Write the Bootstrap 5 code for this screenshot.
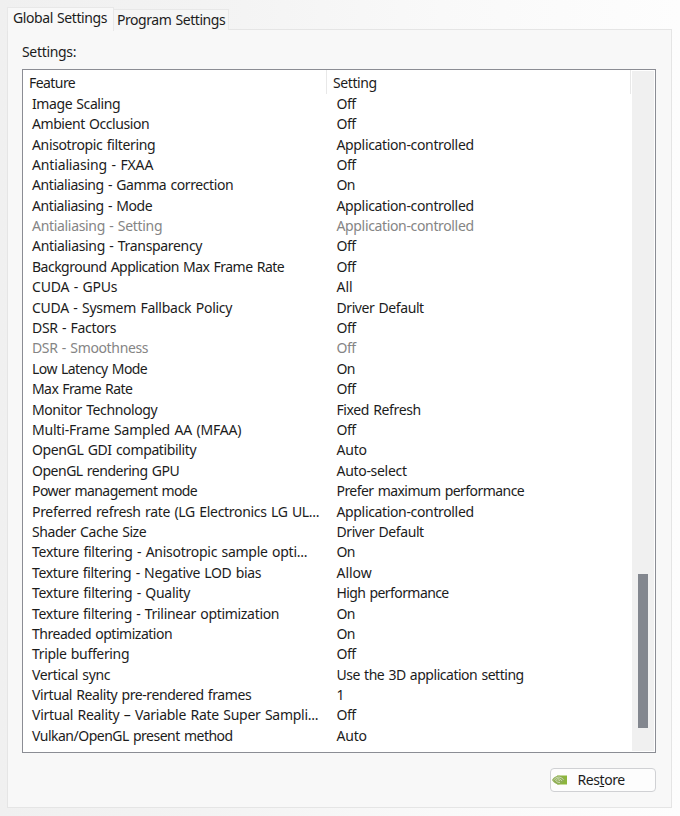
<!DOCTYPE html>
<html lang="en">
<head>
<meta charset="utf-8">
<meta name="viewport" content="width=device-width, initial-scale=1">
<title>Global Settings</title>
<link rel="stylesheet" href="https://cdn.jsdelivr.net/npm/bootstrap@5.3.0/dist/css/bootstrap.min.css">
<style>
body{width:680px;height:816px;font-family:"Noto Sans",sans-serif;font-size:14px;line-height:20px;color:#1c1c1c;background:linear-gradient(90deg,#f0f0f0 0,#f3f3f3 30%,#f9f9f9 65%,#fdfdfd 100%);white-space:nowrap}
.tabs{height:30px;padding:7px 0 0 7px}
.tab-on{width:107px;height:24px;background:#f8f8f8;border:1px solid #e8e8e8;border-bottom:0;padding:0 0 0 5px;z-index:1;margin-bottom:-1px}
.tab-off{width:115px;height:21px;background:#f5f5f5;border:1px solid #e8e8e8;border-left:0;border-bottom:0;padding:0 0 0 3px}
.panel{margin:-1px 8px 0 7px;height:779px;background:#f8f8f8;border:1px solid #e5e5e5;padding:0 15px 0 14px}
.caption{height:39px;padding-top:12px}
.listbox{height:684px;background:#fff;border:1px solid #8b8d94}
.head{height:23.75px}
.head>div{padding:2.5px 0 0 6px}
.c1{width:304px;border-right:1px solid #e8e8e8}
.c2{width:304px;border-right:1px solid #e8e8e8}
.item{height:20.4px;line-height:20.4px}
.item>div:first-child{width:304.5px;padding-left:9px}
.item>div:last-child{padding-left:9px}
.off{color:#858585}
.track{width:22px;background:#f0f0f0;margin:1px 1px 1px 0;padding:503px 0 0 6px}
.thumb{width:10px;height:154px;background:#83878f}
.restore{width:106px;height:24px;margin-top:15px;background:#fdfdfd;border:1px solid #d0d1d4;border-radius:4px;padding:0 0 0 1px;color:#1c1c1c;font-size:14px;line-height:20px}
.restore .fit{margin-left:10.5px}
.fit{display:inline-block;word-spacing:1px}
</style>
</head>
<body class="overflow-hidden">
<div class="tabs d-flex align-items-end">
 <div class="tab-on position-relative"><span class="fit" data-w="94.8">Global Settings</span></div>
 <div class="tab-off"><span class="fit" data-w="109">Program Settings</span></div>
</div>
<main class="panel">
 <div class="caption"><span class="fit" data-w="55">Settings:</span></div>
 <div class="listbox d-flex">
  <div class="flex-grow-1">
   <div class="head d-flex"><div class="c1"><span class="fit" data-w="47">Feature</span></div><div class="c2"><span class="fit" data-w="44.5">Setting</span></div></div>
   <div id="rows"></div>
  </div>
  <div class="track"><div class="thumb"></div></div>
 </div>
 <div class="d-flex justify-content-end">
  <button class="btn restore d-flex align-items-center" type="button">
   <svg width="15" height="10" viewBox="0 0 15 10"><path fill="#8db63c" d="M5 .5h10v9H5z"/><path fill="#8fae55" d="M0 5Q3 .7 7 .8q3.5.1 6 3.7Q10 9.4 6.5 9.4T0 5z"/><path fill="none" stroke="#d3dfbd" stroke-width=".9" d="M1.5 5Q4 1.8 7 2q3 .2 4.5 2.8M3.5 5Q5.2 3 7.2 3.8T10 6M3.5 5Q5 8 8 7.5M5.5 5Q7 4.5 8 6"/></svg>
   <span class="fit" data-w="48">Res<u>t</u>ore</span>
  </button>
 </div>
</main>
<script src="https://cdn.jsdelivr.net/npm/bootstrap@5.3.0/dist/js/bootstrap.bundle.min.js"></script>
<script>
// feature, width, setting, disabled
const settings=[
["Image Scaling",89,"Off"],["Ambient Occlusion",118,"Off"],["Anisotropic filtering",124,"Application-controlled"],
["Antialiasing - FXAA",122,"Off"],["Antialiasing - Gamma correction",202,"On"],["Antialiasing - Mode",121,"Application-controlled"],
["Antialiasing - Setting",131,"Application-controlled",1],["Antialiasing - Transparency",171,"Off"],
["Background Application Max Frame Rate",253,"Off"],["CUDA - GPUs",86,"All"],["CUDA - Sysmem Fallback Policy",201,"Driver Default"],
["DSR - Factors",85,"Off"],["DSR - Smoothness",117,"Off",1],["Low Latency Mode",116,"On"],["Max Frame Rate",101,"Off"],
["Monitor Technology",126,"Fixed Refresh"],["Multi-Frame Sampled AA (MFAA)",210,"Off"],["OpenGL GDI compatibility",165,"Auto"],
["OpenGL rendering GPU",148,"Auto-select"],["Power management mode",166,"Prefer maximum performance"],
["Preferred refresh rate (LG Electronics LG UL...",288,"Application-controlled"],["Shader Cache Size",115,"Driver Default"],
["Texture filtering - Anisotropic sample opti...",276,"On"],["Texture filtering - Negative LOD bias",230,"Allow"],
["Texture filtering - Quality",159,"High performance"],["Texture filtering - Trilinear optimization",248,"On"],
["Threaded optimization",141,"On"],["Triple buffering",98,"Off"],["Vertical sync",79,"Use the 3D application setting"],
["Virtual Reality pre-rendered frames",220,"1"],["Virtual Reality – Variable Rate Super Sampli...",287,"Off"],["Vulkan/OpenGL present method",201.5,"Auto"]];
const widths={"Off":20,"On":19,"All":17,"Auto":31,"Allow":36,"Application-controlled":138,"Driver Default":88,"Fixed Refresh":85,"Auto-select":71,"Prefer maximum performance":188.5,"High performance":113,"Use the 3D application setting":188};
document.getElementById("rows").innerHTML=settings.map(([f,w,s,d])=>
 `<div class="item d-flex ${d?"off":""}"><div><span class="fit" data-w="${w}">${f}</span></div><div><span class="fit" ${widths[s]?`data-w="${widths[s]}"`:""}>${s}</span></div></div>`).join("");
document.querySelectorAll("[data-w]").forEach(e=>{
 e.style.letterSpacing=(e.dataset.w-.8-e.getBoundingClientRect().width)/e.textContent.length+"px";
});
</script>
</body>
</html>
